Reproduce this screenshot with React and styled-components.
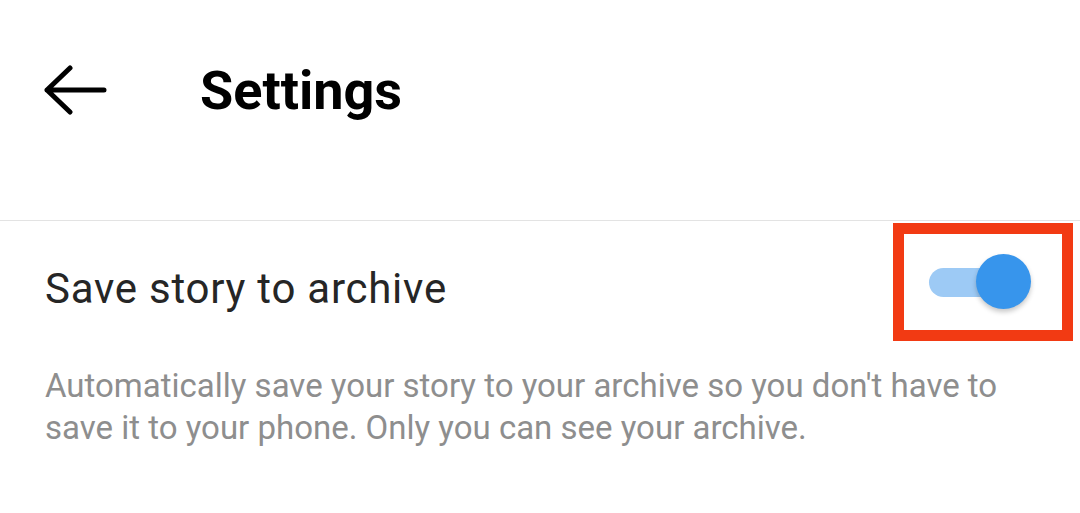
import React, { useState } from "react";
import styled, { createGlobalStyle } from "styled-components";

const GlobalStyle = createGlobalStyle`
    body {
        margin: 0;
        background: #ffffff;
        font-family: Roboto, "Noto Sans", Arial, sans-serif;
        color: #262626;
    }
`;

const BackArrow = () => (
    <svg width="64" height="50" viewBox="0 0 64 50" fill="none">
        <path
            d="M61 25H4M27 3L4 25L27 47"
            stroke="#000"
            strokeWidth="5"
            strokeLinecap="round"
            strokeLinejoin="round"
        />
    </svg>
);

const App = () => {
    const [saveStory, setSaveStory] = useState(true);

    return (
        <Page>
            <GlobalStyle />
            <Header>
                <BackButton aria-label="Back">
                    <BackArrow />
                </BackButton>
                <Title>Settings</Title>
            </Header>

            <SettingRow>
                <SettingLabel>Save story to archive</SettingLabel>
                <Highlight>
                    <Toggle
                        on={saveStory ? 1 : 0}
                        onClick={() => setSaveStory(!saveStory)}
                        aria-label="Save story to archive"
                    >
                        <Thumb on={saveStory ? 1 : 0} />
                    </Toggle>
                </Highlight>
            </SettingRow>

            <Description>
                Automatically save your story to your archive so you don't have to
                save it to your phone. Only you can see your archive.
            </Description>
        </Page>
    );
};

const Page = styled.div`
    width: 1080px;
    height: 513px;
    overflow: hidden;
    background: #fff;
`;

const Header = styled.div`
    display: flex;
    align-items: center;
    height: 180px;
    padding-bottom: 40px;
    border-bottom: 1px solid #e3e3e3;
    box-sizing: content-box;
`;

const BackButton = styled.button`
    display: flex;
    align-items: center;
    background: none;
    border: 0;
    padding: 0;
    margin-left: 43px;
    margin-right: 93px;
    cursor: pointer;
`;

const Title = styled.h1`
    margin: 0;
    font-size: 54px;
    font-weight: 700;
    color: #000;
    letter-spacing: 0;
`;

const SettingRow = styled.div`
    display: flex;
    align-items: center;
    justify-content: space-between;
    padding: 5px 7px 0 45px;
`;

const SettingLabel = styled.div`
    font-size: 42px;
    letter-spacing: 0.75px;
    padding-top: 10px;
    color: #262626;
`;

const Highlight = styled.div`
    width: 158px;
    height: 96px;
    margin-top: -3px;
    border: 11px solid #f23a13;
    display: flex;
    align-items: center;
`;

const Toggle = styled.button`
    position: relative;
    width: 88px;
    height: 29px;
    border: 0;
    padding: 0;
    border-radius: 15px;
    background: ${(p) => (p.on ? "#9dcaf5" : "#c7c7c7")};
    margin-left: 25px;
    cursor: pointer;
`;

const Thumb = styled.span`
    position: absolute;
    top: 50%;
    left: ${(p) => (p.on ? "47px" : "-8px")};
    width: 55px;
    height: 55px;
    margin-top: -28px;
    border-radius: 50%;
    background: ${(p) => (p.on ? "#3795ec" : "#f5f5f5")};
    box-shadow: 0 3px 5px rgba(0, 0, 0, 0.22);
`;

const Description = styled.p`
    margin: 24px 0 0 45px;
    width: 1010px;
    font-size: 33px;
    line-height: 42px;
    color: #8e8e8e;
`;

export default App;
